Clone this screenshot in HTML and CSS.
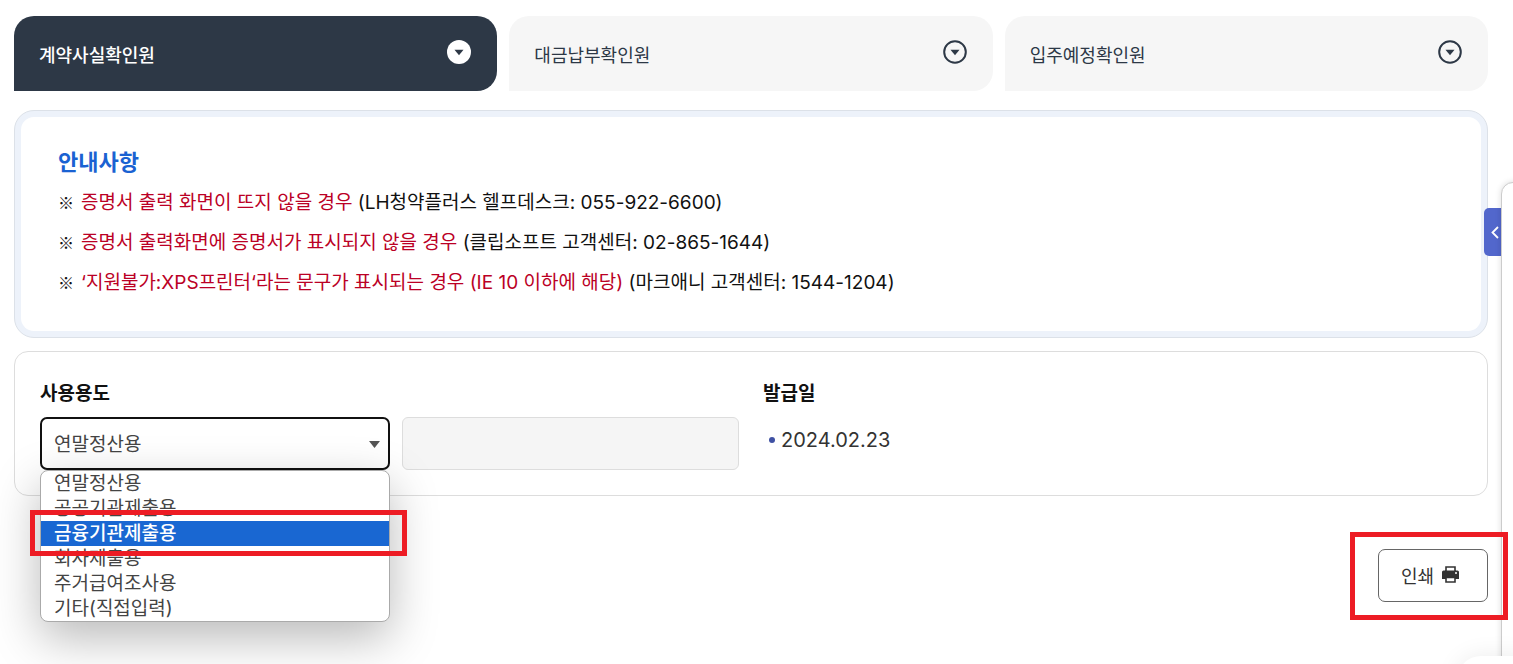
FILE: index.html
```html
<!doctype html>
<html lang="ko">
<head>
    <meta charset="UTF-8">
    <meta name="viewport" content="width=device-width, initial-scale=1.0">
    <title>계약사실확인원</title>
    <link rel="stylesheet" href="styles.css">
</head>
<body>

<main class="page">
    <nav class="tabs">
        <a href="#" class="tab tab-active">
            <span>계약사실확인원</span>
            <svg class="tab-icon" viewBox="0 0 24 24"><circle cx="12" cy="12" r="12" fill="#fff"/><path d="M7.5 9.7h9L12 15.2z" fill="#2d3846"/></svg>
        </a>
        <a href="#" class="tab">
            <span>대금납부확인원</span>
            <svg class="tab-icon" viewBox="0 0 24 24"><circle cx="12" cy="12" r="10.8" fill="none" stroke="#2d3846" stroke-width="2"/><path d="M7.5 9.7h9L12 15.2z" fill="#2d3846"/></svg>
        </a>
        <a href="#" class="tab">
            <span>입주예정확인원</span>
            <svg class="tab-icon" viewBox="0 0 24 24"><circle cx="12" cy="12" r="10.8" fill="none" stroke="#2d3846" stroke-width="2"/><path d="M7.5 9.7h9L12 15.2z" fill="#2d3846"/></svg>
        </a>
    </nav>

    <section class="notice">
        <div class="notice-body">
            <h2 class="notice-title">안내사항</h2>
            <ul class="notice-list">
                <li><span class="mark">※</span><span class="red">증명서 출력 화면이 뜨지 않을 경우</span> (LH청약플러스 헬프데스크: 055-922-6600)</li>
                <li><span class="mark">※</span><span class="red">증명서 출력화면에 증명서가 표시되지 않을 경우</span> (클립소프트 고객센터: 02-865-1644)</li>
                <li><span class="mark">※</span><span class="red">‘지원불가:XPS프린터‘라는 문구가 표시되는 경우 (IE 10 이하에 해당)</span> (마크애니 고객센터: 1544-1204)</li>
            </ul>
        </div>
    </section>

    <form class="form">
        <div class="form-col">
            <label class="form-label" for="usage">사용용도</label>
            <div class="fields">
                <div class="select-wrap">
                    <select class="select" id="usage">
                        <option>연말정산용</option>
                        <option>공공기관제출용</option>
                        <option>금융기관제출용</option>
                        <option>회사제출용</option>
                        <option>주거급여조사용</option>
                        <option>기타(직접입력)</option>
                    </select>
                    <svg class="select-arrow" viewBox="0 0 11 7"><path d="M0 0h11L5.5 7z" fill="#555"/></svg>
                    <ul class="options" role="listbox" aria-label="사용용도">
                        <li class="option" role="option">연말정산용</li>
                        <li class="option" role="option">공공기관제출용</li>
                        <li class="option option-on" role="option" aria-selected="true">금융기관제출용</li>
                        <li class="option" role="option">회사제출용</li>
                        <li class="option" role="option">주거급여조사용</li>
                        <li class="option" role="option">기타(직접입력)</li>
                    </ul>
                </div>
                <input class="text" type="text" aria-label="직접입력" disabled>
            </div>
        </div>
        <div class="form-col">
            <h3 class="form-label">발급일</h3>
            <p class="date">2024.02.23</p>
        </div>
    </form>

    <div class="actions">
        <div class="print-wrap">
            <button type="button" class="print">
                인쇄
                <svg class="print-icon" viewBox="0 0 17 17">
                    <path d="M1.5 4.500h14A1.500 1.500 0 0 1 17 6v7H0V6a1.500 1.500 0 0 1 1.500-1.500z" fill="#333"/>
                    <path d="M4 5V1h9v4M4 11.500h9V16H4z" fill="#fff" stroke="#333" stroke-width="1.600"/>
                    <path d="M3 4.500h11v3.500H3z" fill="#333"/>
                    <circle cx="14" cy="7" r="1" fill="#fff"/>
                </svg>
            </button>
        </div>
    </div>
</main>

<button type="button" class="side-toggle" aria-label="열기">
    <svg class="side-icon" viewBox="0 0 8 13"><path d="M7 1L1.500 6.500 7 12" fill="none" stroke="#fff" stroke-width="1.800"/></svg>
</button>
<aside class="side-panel"></aside>
<div class="side-bottom"></div>

</body>
</html>
```
FILE: styles.css
```css
*{
    padding: 0;
    margin: 0;
    box-sizing: border-box;
}

body{
    background: #fff;
    min-height: 100vh;
    position: relative;
    overflow: hidden;
    color: #111;
    font-family: Inter, 'Noto Sans CJK KR', sans-serif;
    font-size: 19px;
}
ul{
    list-style: none;
}
.page{
    padding: 16px 25px 0 14px;
}

/* tabs */
.tabs{
    display: grid;
    grid-template-columns: repeat(3, 1fr);
    gap: 12px;
}
.tab{
    display: flex;
    justify-content: space-between;
    align-items: center;
    height: 75px;
    padding: 0 26px 0 25px;
    border-radius: 20px 20px 20px 0;
    background: #f6f6f6;
    color: #2d3846;
    font-size: 18px;
    text-decoration: none;
}
.tab-active{
    background: #2d3846;
    color: #fff;
    font-weight: 500;
}
.tab-icon{
    width: 24px;
    height: 24px;
    margin-bottom: 3px;
}

/* notice */
.notice{
    margin-top: 19px;
    padding: 6px;
    border: 1px solid #dce1e8;
    border-radius: 20px;
    background: #edf2fa;
}
.notice-body{
    padding: 25px 37px 28px;
    border-radius: 13px;
    background: #fff;
    line-height: 40px;
}
.notice-title{
    margin-bottom: 1px;
    color: #1a62d2;
    font-size: 22px;
    font-weight: 700;
}
.mark{
    display: inline-block;
    width: 23px;
    font-family: 'Noto Sans CJK KR', sans-serif;
    font-size: 16px;
    line-height: 1;
}
.red{
    color: #bb0025;
}

/* form */
.form{
    display: grid;
    grid-template-columns: 1fr 1fr;
    gap: 24px;
    margin-top: 13px;
    padding: 26px 25px 25px;
    border: 1px solid #ddd;
    border-radius: 14px;
}
.form-label{
    display: block;
    margin-bottom: 7px;
    font-size: 19px;
    font-weight: 700;
    line-height: 32px;
}
.fields{
    display: grid;
    grid-template-columns: 51fr 49fr;
    gap: 12px;
}
.select-wrap{
    position: relative;
}
.select{
    display: block;
    appearance: none;
    width: 100%;
    height: 53px;
    padding: 2px 12px 0;
    border: 2px solid #111;
    border-radius: 7px;
    background: #fff;
    color: #444;
    font: inherit;
}
.select-arrow{
    position: absolute;
    top: 24px;
    right: 10px;
    width: 11px;
    height: 7px;
}
.options{
    position: absolute;
    top: 53px;
    left: 0;
    right: 0;
    z-index: 2;
    border: 1px solid #aaa;
    border-radius: 8px;
    background: #fff;
    box-shadow: 0 16px 48px rgba(0, 0, 0, 0.28);
}
.option{
    position: relative;
    height: 25px;
    padding-left: 13px;
    color: #444;
    line-height: 25px;
}
.option-on{
    background: #1967d2;
    color: #fff;
    font-weight: 500;
}
.option-on::after{
    content: "";
    position: absolute;
    inset: -11px -18px -10px -11px;
    z-index: 1;
    border: 5px solid #ed1c24;
}
.text{
    width: 100%;
    height: 53px;
    border: 1px solid #ddd;
    border-radius: 6px;
    background: #f5f5f5;
}
.date{
    display: flex;
    align-items: center;
    gap: 6px;
    padding-left: 6px;
    color: #333;
    font-size: 20px;
    line-height: 46px;
}
.date::before{
    content: "";
    width: 6px;
    height: 6px;
    border-radius: 50%;
    background: #3f51a3;
}

/* print */
.actions{
    display: flex;
    justify-content: flex-end;
    margin-top: 53px;
}
.print-wrap{
    position: relative;
}
.print-wrap::after{
    content: "";
    position: absolute;
    inset: -17px -20px -18px -28px;
    z-index: 3;
    border: 5px solid #ed1c24;
    pointer-events: none;
}
.print{
    display: flex;
    align-items: center;
    gap: 8px;
    height: 53px;
    padding: 0 28px 2px 22px;
    border: 1px solid #666;
    border-radius: 7px;
    background: #fff;
    color: #333;
    font: inherit;
    font-size: 18px;
}
.print-icon{
    width: 17px;
    height: 17px;
}

/* right side panel */
.side-panel{
    position: absolute;
    top: 182px;
    right: -20px;
    bottom: -20px;
    width: 32px;
    border: 1px solid #ccc;
    border-radius: 12px 0 0 0;
    background: #fff;
    box-shadow: 0 0 6px rgba(0, 0, 0, 0.14);
}
.side-toggle{
    position: absolute;
    top: 208px;
    right: 12px;
    display: flex;
    justify-content: flex-end;
    align-items: center;
    width: 17px;
    height: 48px;
    padding-right: 2px;
    border: 0;
    border-radius: 5px 0 0 5px;
    background: #5267cc;
}
.side-icon{
    width: 8px;
    height: 13px;
}
.side-bottom{
    position: absolute;
    right: -20px;
    bottom: -32px;
    width: 76px;
    height: 40px;
    border-radius: 24px 0 0 0;
    background: #fff;
    box-shadow: 0 0 24px rgba(0, 0, 0, 0.08);
}
```
